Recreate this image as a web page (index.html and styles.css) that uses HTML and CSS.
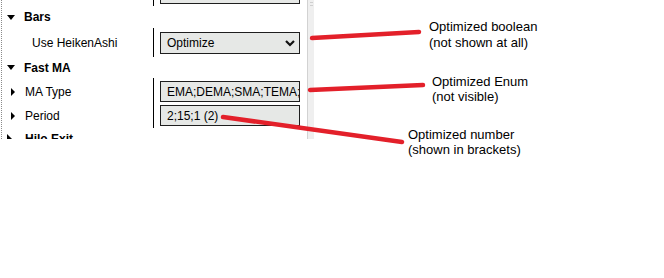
FILE: index.html
```html
<!DOCTYPE html>
<html>
<head>
<meta charset="utf-8">
<link rel="stylesheet" href="styles.css">
</head>
<body>
<div class="page">
  <div class="panel">
    <div class="grid">
      <div class="group first">
        <div class="labels"><div class="lrow h21"></div></div>
        <div class="values"><div class="box h21"></div></div>
      </div>
      <div class="header h22"><span class="tri-down"></span><span>Bars</span></div>
      <div class="group g2">
        <div class="labels"><div class="lrow h22 plain">Use HeikenAshi</div></div>
        <div class="values">
          <div class="box h22 select"><span>Optimize</span>
            <svg class="chev" width="10" height="7" viewBox="0 0 10 7"><polyline points="1,1 5,5 9,1" fill="none" stroke="#111" stroke-width="2.2"/></svg>
          </div>
        </div>
      </div>
      <div class="header h21"><span class="tri-down"></span><span>Fast MA</span></div>
      <div class="group">
        <div class="labels">
          <div class="lrow h21"><span class="tri-right"></span><span>MA Type</span></div>
          <div class="lrow h21"><span class="tri-right"></span><span>Period</span></div>
        </div>
        <div class="values">
          <div class="box h21"><span>EMA;DEMA;SMA;TEMA;ZLEMA;WMA</span></div>
          <div class="box h21"><span>2;15;1 (2)</span></div>
        </div>
      </div>
      <div class="header h22"><span class="tri-right big"></span><span>Hilo Exit</span></div>
    </div>
    <div class="scrollbar"><span class="grip"></span><span class="grip"></span></div>
  </div>

  <svg class="marks" width="664" height="278" viewBox="0 0 664 278">
    <g stroke="#e3202a" stroke-width="4.5" stroke-linecap="round" fill="none">
      <line x1="312" y1="38" x2="419" y2="32"/>
      <line x1="310" y1="90" x2="423" y2="85"/>
      <line x1="223" y1="117" x2="402" y2="142"/>
    </g>
  </svg>
  <div class="note n1">Optimized boolean<br>(not shown at all)</div>
  <div class="note n2">Optimized Enum<br>(not visible)</div>
  <div class="note n3">Optimized number<br>(shown in brackets)</div>
</div>
</body>
</html>
```
FILE: styles.css
```css
html, body {
  margin: 0;
  padding: 0;
  background: #ffffff;
}
.page {
  position: relative;
  width: 664px;
  height: 278px;
  font-family: "Liberation Sans", Arial, sans-serif;
  color: #000;
}
.panel {
  margin-left: 1px;
  width: 313px;
  height: 139px;
  overflow: hidden;
  border-left: 1px dotted #8a8a8a;
  display: flex;
  box-sizing: border-box;
}
.grid {
  width: 305px;
  display: flex;
  flex-direction: column;
  font-size: 12px;
}
.grid > * {
  flex: none;
}
.group {
  display: flex;
}
.group.first {
  margin-top: -20px;
}
.labels {
  width: 151px;
  display: flex;
  flex-direction: column;
  gap: 3px;
  padding: 3px 0 2px 0;
}
.values {
  border-left: 1px solid #000;
  width: 154px;
  box-sizing: border-box;
  padding: 3px 7px 2px 6px;
  display: flex;
  flex-direction: column;
  gap: 3px;
}
.labels > *, .values > * {
  flex: none;
}
.g2 .labels, .g2 .values {
  padding-top: 4px;
  padding-bottom: 3px;
}
.h21 { height: 21px; }
.h22 { height: 22px; }
.lrow {
  display: flex;
  align-items: center;
  white-space: nowrap;
}
.lrow.plain {
  padding-left: 30px;
}
.tri-right {
  width: 0;
  height: 0;
  border-top: 4px solid transparent;
  border-bottom: 4px solid transparent;
  border-left: 4px solid #000;
  margin-left: 9px;
  margin-right: 10px;
}
.tri-right.big {
  border-top-width: 5px;
  border-bottom-width: 5px;
  border-left-width: 5px;
  margin-left: 5px;
  margin-right: 13px;
}
.header {
  display: flex;
  align-items: center;
  font-weight: bold;
  white-space: nowrap;
}
.tri-down {
  width: 0;
  height: 0;
  border-left: 4.5px solid transparent;
  border-right: 4.5px solid transparent;
  border-top: 5px solid #000;
  margin-left: 5px;
  margin-right: 9px;
}
.box {
  box-sizing: border-box;
  width: 140px;
  border: 1px solid #1e1e1e;
  background: #e6e8e6;
  display: flex;
  align-items: center;
  padding-left: 6px;
  overflow: hidden;
  white-space: nowrap;
  position: relative;
}
.select {
  justify-content: space-between;
  padding-right: 4px;
}
.chev {
  flex: none;
}
.scrollbar {
  width: 7px;
  box-sizing: border-box;
  background: #efefef;
  border-left: 1px solid #d2d2d2;
  display: flex;
  flex-direction: column;
  gap: 2px;
  padding: 2px 1px 0 2px;
}
.grip {
  height: 1px;
  background: #cfcfcf;
}
.marks {
  position: absolute;
  left: 0;
  top: 0;
  pointer-events: none;
}
.note {
  position: absolute;
  font-size: 13px;
  line-height: 16px;
  white-space: nowrap;
  color: #000;
}
.n1 { left: 429px; top: 19px; }
.n2 { left: 432px; top: 74px; line-height: 15px; }
.n3 { left: 408px; top: 127px; line-height: 15px; }
```
